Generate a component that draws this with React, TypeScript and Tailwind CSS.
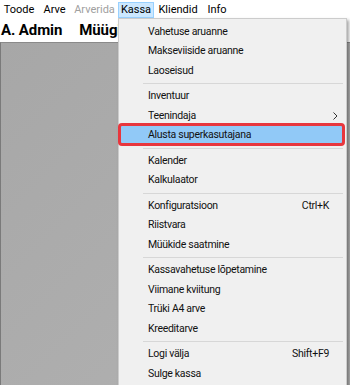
const menuBar = [
  { label: 'Toode', w: 'w-[38px]' },
  { label: 'Arve', w: 'w-[33px]' },
  { label: 'Arverida', w: 'w-[47px]', disabled: true },
  { label: 'Kassa', w: 'w-[36px]', active: true },
  { label: 'Kliendid', w: 'w-[48px]' },
  { label: 'Info', w: 'w-[30px]' },
]

type Item = { label: string; shortcut?: string; arrow?: boolean; marked?: boolean } | 'sep'

const kassaItems: Item[] = [
  { label: 'Vahetuse aruanne' },
  { label: 'Makseviiside aruanne' },
  { label: 'Laoseisud' },
  'sep',
  { label: 'Inventuur' },
  { label: 'Teenindaja', arrow: true },
  { label: 'Alusta superkasutajana', marked: true },
  'sep',
  { label: 'Kalender' },
  { label: 'Kalkulaator' },
  'sep',
  { label: 'Konfiguratsioon', shortcut: 'Ctrl+K' },
  { label: 'Riistvara' },
  { label: 'Müükide saatmine' },
  'sep',
  { label: 'Kassavahetuse lõpetamine' },
  { label: 'Viimane kviitung' },
  { label: 'Trüki A4 arve' },
  { label: 'Kreeditarve' },
  'sep',
  { label: 'Logi välja', shortcut: 'Shift+F9' },
  { label: 'Sulge kassa' },
]

const App: React.FC = () => {
  return (
    <div className="relative w-[350px] h-[385px] overflow-hidden bg-white font-['Roboto',sans-serif] text-black">
      {/* menubar */}
      <div className="flex h-[19px] bg-white text-[11px]">
        {menuBar.map((item, index) => (
          <div
            key={`menubar-${index}`}
            className={`${item.w} flex items-center justify-center mt-[2px] h-[16px] ${
              item.active ? 'bg-[#cce8ff] border border-[#99d1ff]' : ''
            } ${item.disabled ? 'text-[#a0a0a0]' : ''}`}
          >
            {item.label}
          </div>
        ))}
      </div>

      {/* header row */}
      <div className="flex items-center h-[23px] bg-white pl-[1px] text-[15px] font-bold tracking-[-0.1px]">
        <span>A. Admin</span>
        <span className="ml-[17px]">Müügi</span>
      </div>

      {/* gray work area */}
      <div className="h-[343px] border-t border-[#8a8a8a] border-l border-l-[#7a7a7a] bg-gradient-to-br from-[#a7a7a7] to-[#b2b2b2]" />

      {/* dropdown */}
      <div className="absolute left-[118px] top-[18px] w-[229px] pt-[3px] pb-[3px] bg-[#f0f0f0] border border-[#cccccc] shadow-[2px_2px_3px_rgba(0,0,0,0.35)] text-[10.5px] tracking-[-0.3px] text-[#111]">
        {kassaItems.map((item, index) =>
          item === 'sep' ? (
            <div key={`sep-${index}`} className="flex items-center h-[6px] ml-[24px] mr-[3px]">
              <div className="h-px w-full bg-[#d7d7d7]" />
            </div>
          ) : (
            <div
              key={`item-${index}`}
              className={`relative flex items-center h-[19.5px] mx-[2px] pl-[27px] pr-[15px] ${
                item.marked ? 'bg-[#91c9f7]' : ''
              }`}
            >
              <span className="flex-1">{item.label}</span>
              {item.shortcut && <span>{item.shortcut}</span>}
              {item.arrow && (
                <svg width="5" height="8" viewBox="0 0 5 8" className="mr-[-9px]">
                  <polyline points="0.5,0.5 4,4 0.5,7.5" fill="none" stroke="#333" strokeWidth="1" />
                </svg>
              )}
              {item.marked && (
                <div className="absolute -left-[3px] -right-[1px] -top-[3px] -bottom-[1px] rounded-[4px] border-[3px] border-[#e8363d]" />
              )}
            </div>
          )
        )}
      </div>
    </div>
  )
}

export default App
